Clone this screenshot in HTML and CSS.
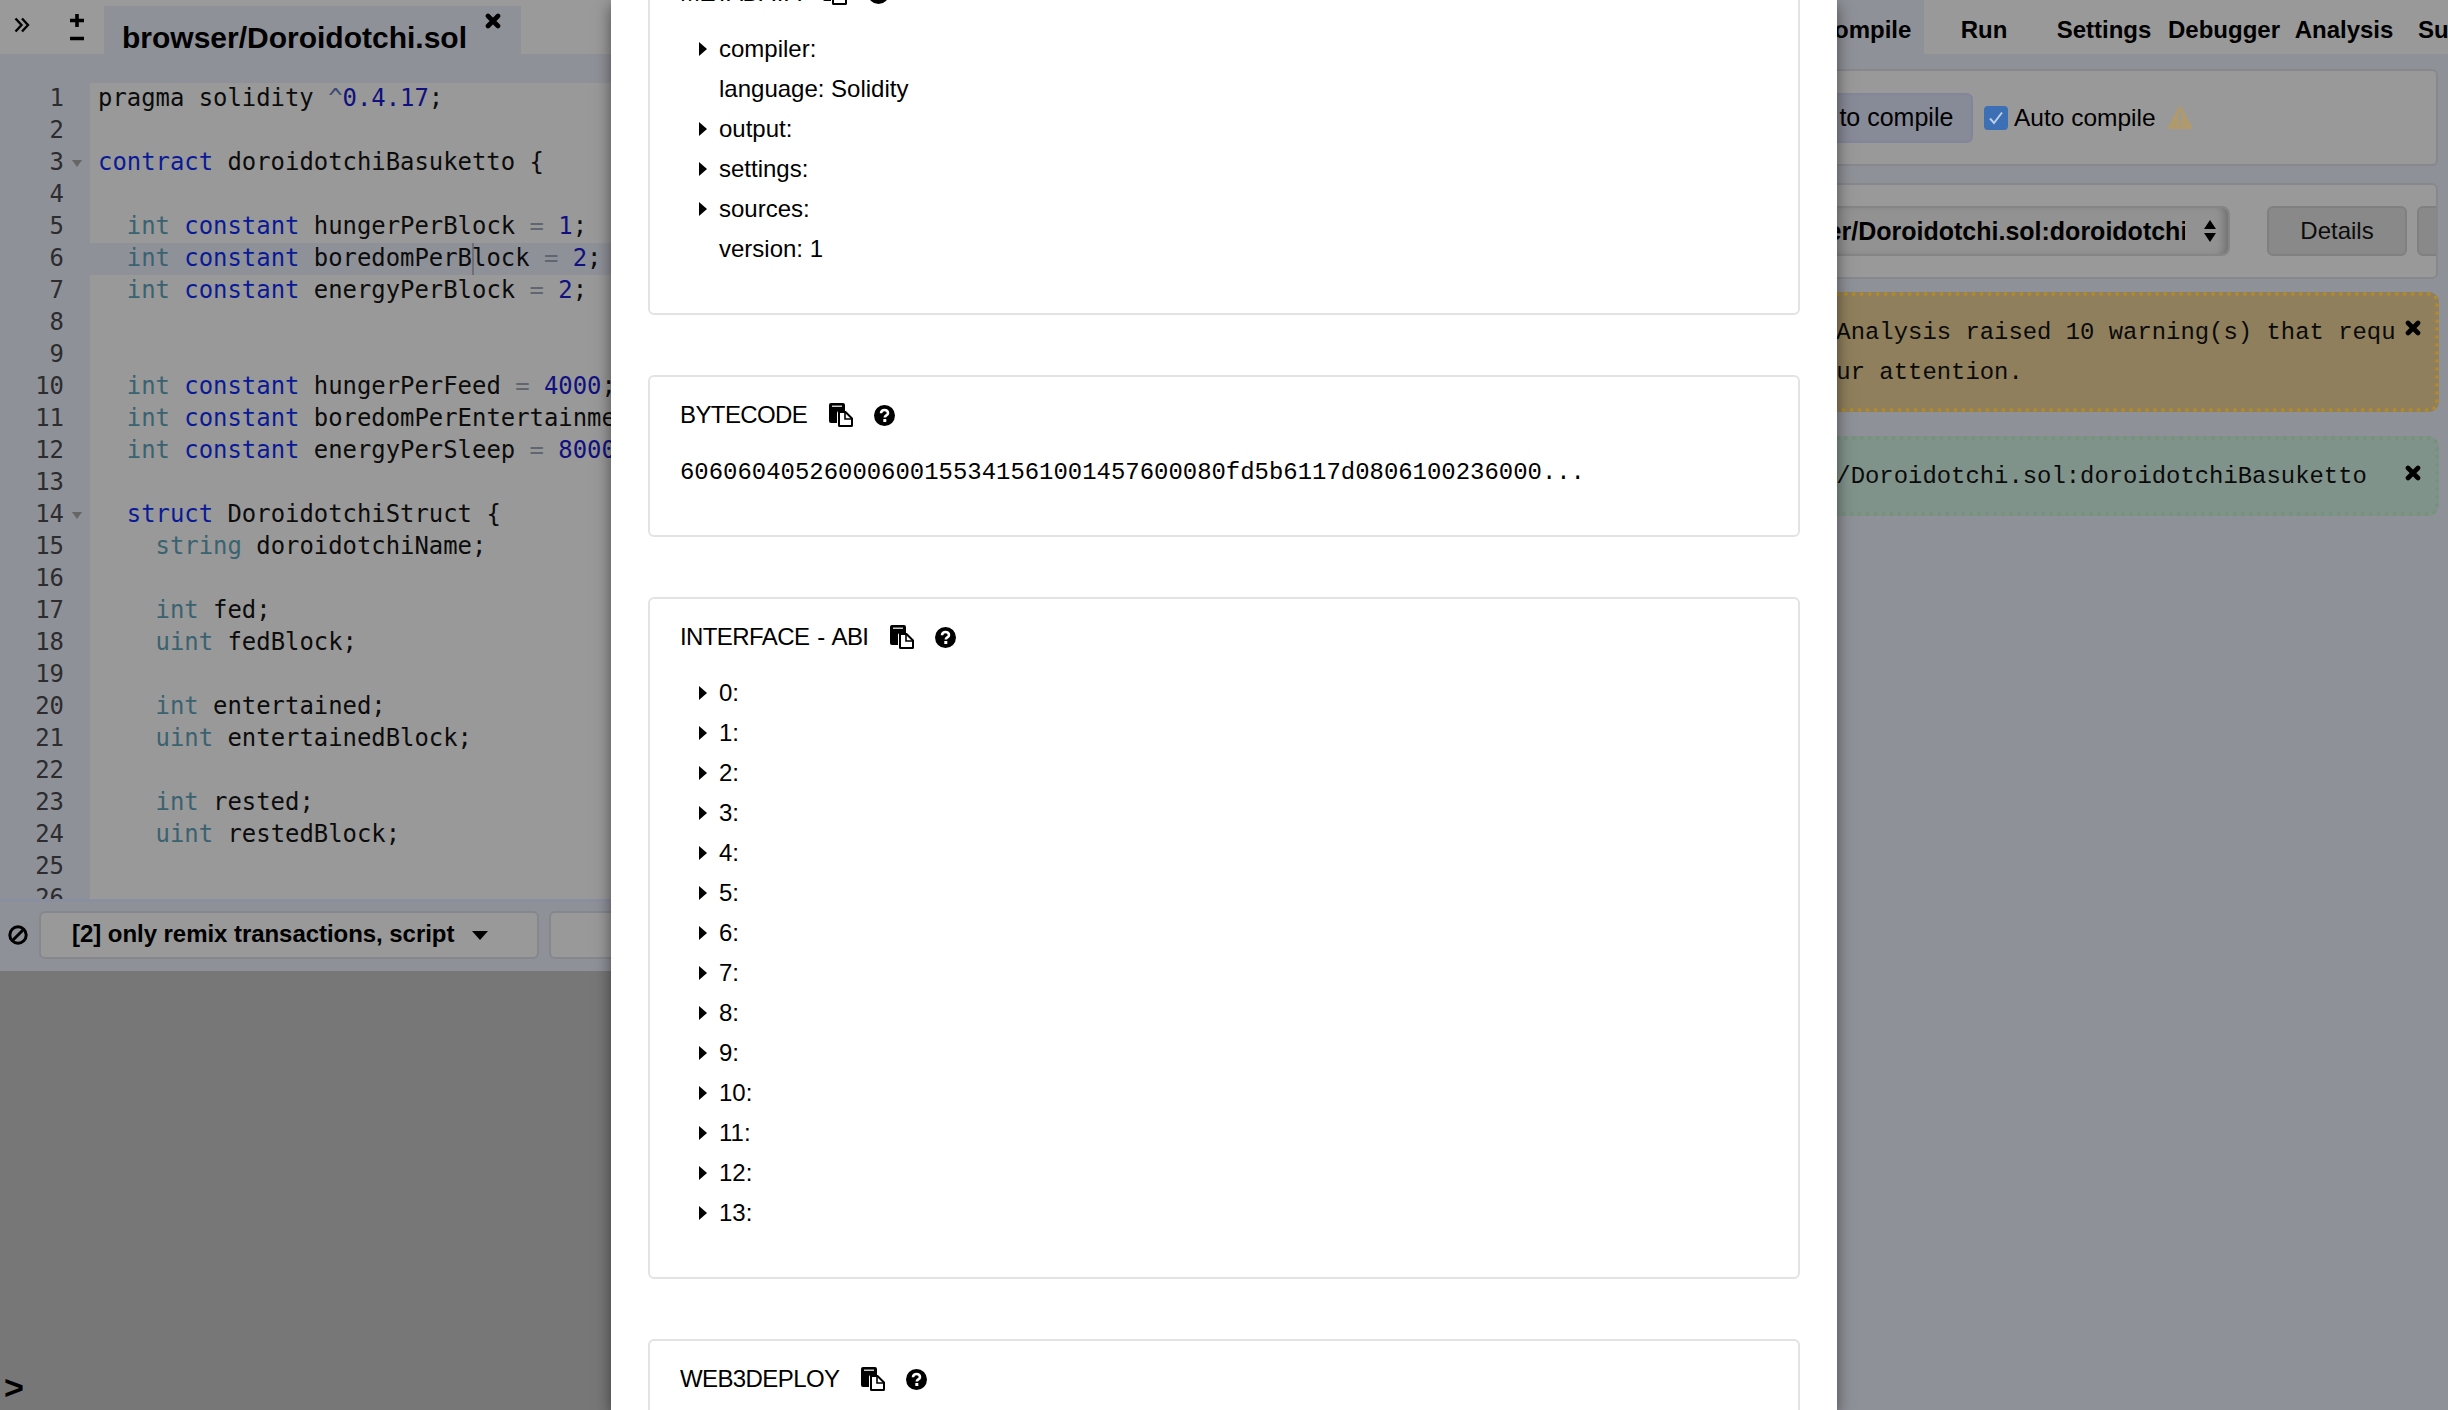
FILE: index.html
```html
<!DOCTYPE html>
<html lang="en">
<head>
<meta charset="utf-8">
<title>Remix</title>
<link rel="stylesheet" href="styles.css">
</head>
<body>
<svg class="sprites" width="0" height="0" aria-hidden="true">
  <symbol id="i-close" viewBox="0 0 16 16"><path d="M3 3 L13 13 M13 3 L3 13" fill="none" stroke="currentColor" stroke-width="4.6" stroke-linecap="round"/></symbol>
  <symbol id="i-copy" viewBox="0 0 24 24"><path d="M2 0H14a2 2 0 0 1 2 2V8H10a2 2 0 0 0-2 2V20H2a2 2 0 0 1-2-2V2a2 2 0 0 1 2-2Z" fill="#000"/><path d="M3 3.2H13" stroke="#fff" stroke-width="1.2"/><path d="M10 9H16.500L23 15.500V22.500a.5.5 0 0 1-.5.5H10.500a.5.5 0 0 1-.5-.5Z" fill="#fff" stroke="#000" stroke-width="2"/><path d="M16 9V16H23" fill="none" stroke="#000" stroke-width="1.600"/></symbol>
  <symbol id="i-help" viewBox="0 0 21 21"><circle cx="10.500" cy="10.500" r="10.500" fill="#000"/><path d="M7 8.200C7 6 8.700 5 10.500 5 12.500 5 14 6.200 14 8 14 10.500 10.800 10.300 10.800 12.400" fill="none" stroke="#fff" stroke-width="2.600"/><rect x="9.300" y="14" width="3" height="3" fill="#fff"/></symbol>
</svg>

<div class="app">
  <section class="left">
    <header class="editor-tabs">
      <span class="tool tool-chev"><svg width="16" height="16" viewBox="0 0 16 16"><path d="M1.500 1.500L7.500 8L1.500 14.500M8 1.500L14 8L8 14.500" fill="none" stroke="#000" stroke-width="2.400"/></svg></span>
      <span class="tool tool-size"><svg width="14" height="27" viewBox="0 0 14 27"><path d="M0 6.500H14M7 0V13M0 24.500H14" fill="none" stroke="#000" stroke-width="3.600"/></svg></span>
      <div class="file-tab">
        <span class="file-name">browser/Doroidotchi.sol</span>
        <svg class="file-close"><use href="#i-close"/></svg>
      </div>
    </header>

    <div class="editor">
      <div class="gutter">
        <div>1</div><div>2</div><div class="fold">3</div><div>4</div><div>5</div><div>6</div><div>7</div><div>8</div><div>9</div><div>10</div><div>11</div><div>12</div><div>13</div><div class="fold">14</div><div>15</div><div>16</div><div>17</div><div>18</div><div>19</div><div>20</div><div>21</div><div>22</div><div>23</div><div>24</div><div>25</div><div>26</div>
      </div>
      <div class="code">
        <div class="line">pragma solidity <span class="op-hat">^</span><span class="num">0.4.17</span>;</div>
        <div class="line"></div>
        <div class="line"><span class="kw">contract</span> doroidotchiBasuketto {</div>
        <div class="line"></div>
        <div class="line">  <span class="ty">int</span> <span class="kw">constant</span> hungerPerBlock <span class="op">=</span> <span class="num">1</span>;</div>
        <div class="line active">  <span class="ty">int</span> <span class="kw">constant</span> boredomPerB<span class="caret"></span>lock <span class="op">=</span> <span class="num">2</span>;</div>
        <div class="line">  <span class="ty">int</span> <span class="kw">constant</span> energyPerBlock <span class="op">=</span> <span class="num">2</span>;</div>
        <div class="line"></div>
        <div class="line"></div>
        <div class="line">  <span class="ty">int</span> <span class="kw">constant</span> hungerPerFeed <span class="op">=</span> <span class="num">4000</span>;</div>
        <div class="line">  <span class="ty">int</span> <span class="kw">constant</span> boredomPerEntertainment <span class="op">=</span> <span class="num">4000</span>;</div>
        <div class="line">  <span class="ty">int</span> <span class="kw">constant</span> energyPerSleep <span class="op">=</span> <span class="num">8000</span>;</div>
        <div class="line"></div>
        <div class="line">  <span class="kw">struct</span> DoroidotchiStruct {</div>
        <div class="line">    <span class="ty">string</span> doroidotchiName;</div>
        <div class="line"></div>
        <div class="line">    <span class="ty">int</span> fed;</div>
        <div class="line">    <span class="ty">uint</span> fedBlock;</div>
        <div class="line"></div>
        <div class="line">    <span class="ty">int</span> entertained;</div>
        <div class="line">    <span class="ty">uint</span> entertainedBlock;</div>
        <div class="line"></div>
        <div class="line">    <span class="ty">int</span> rested;</div>
        <div class="line">    <span class="ty">uint</span> restedBlock;</div>
        <div class="line"></div>
        <div class="line"></div>
      </div>
    </div>

    <div class="term-bar">
      <svg class="block-icon" width="20" height="20" viewBox="0 0 20 20"><circle cx="10" cy="10" r="8.200" fill="none" stroke="#000" stroke-width="3"/><path d="M4.500 15.500L15.500 4.500" stroke="#000" stroke-width="3"/></svg>
      <button class="filter">[2] only remix transactions, script<svg class="caret-down" width="16" height="9" viewBox="0 0 16 9"><path d="M0 0H16L8 9Z" fill="#000"/></svg></button>
      <button class="filter filter-2"></button>
    </div>

    <div class="terminal"><span class="prompt">&gt;</span></div>
  </section>

  <aside class="right">
    <nav class="tabs">
      <span class="tab active">Compile</span>
      <span class="tab">Run</span>
      <span class="tab">Settings</span>
      <span class="tab">Debugger</span>
      <span class="tab">Analysis</span>
      <span class="tab">Support</span>
    </nav>

    <div class="box box-compile">
      <button class="start">Start to compile</button>
      <span class="check"><svg width="16" height="14" viewBox="0 0 16 14"><path d="M2 7.500L6 12L14 1.500" fill="none" stroke="#bcd0ea" stroke-width="2"/></svg></span>
      <span class="auto">Auto compile</span>
      <svg class="warn" width="24" height="23" viewBox="0 0 24 23"><path d="M12 2L22.500 21.500H1.500Z" fill="#b09a6c" stroke="#b09a6c" stroke-width="3" stroke-linejoin="round"/><rect x="10.500" y="7" width="3" height="7.500" fill="#999"/><rect x="10.500" y="16.500" width="3" height="3" fill="#999"/></svg>
    </div>

    <div class="box box-contract">
      <div class="select">
        <span class="select-text">browser/Doroidotchi.sol:doroidotchiBasuketto</span>
        <svg class="updown" width="12" height="22" viewBox="0 0 12 22"><path d="M6 0L12 9H0ZM6 22L0 13H12Z" fill="#000"/></svg>
      </div>
      <button class="btn">Details</button>
      <button class="btn btn-next"></button>
    </div>

    <div class="msg msg-warn">
      Static Analysis raised 10 warning(s) that requires your attention.
      <svg class="msg-close"><use href="#i-close"/></svg>
    </div>
    <div class="msg msg-ok">
      browser/Doroidotchi.sol:doroidotchiBasuketto
      <svg class="msg-close"><use href="#i-close"/></svg>
    </div>
  </aside>

  <div class="modal">
    <section class="card card-meta">
      <h3 class="card-title">METADATA <svg class="ic-copy"><use href="#i-copy"/></svg><svg class="ic-help"><use href="#i-help"/></svg></h3>
      <ul class="tree">
        <li class="node">compiler:</li>
        <li>language: Solidity</li>
        <li class="node">output:</li>
        <li class="node">settings:</li>
        <li class="node">sources:</li>
        <li>version: 1</li>
      </ul>
    </section>

    <section class="card">
      <h3 class="card-title">BYTECODE <svg class="ic-copy"><use href="#i-copy"/></svg><svg class="ic-help"><use href="#i-help"/></svg></h3>
      <p class="hex">60606040526000600155341561001457600080fd5b6117d0806100236000...</p>
    </section>

    <section class="card">
      <h3 class="card-title">INTERFACE - ABI <svg class="ic-copy"><use href="#i-copy"/></svg><svg class="ic-help"><use href="#i-help"/></svg></h3>
      <ul class="tree">
        <li class="node">0:</li><li class="node">1:</li><li class="node">2:</li><li class="node">3:</li><li class="node">4:</li><li class="node">5:</li><li class="node">6:</li><li class="node">7:</li><li class="node">8:</li><li class="node">9:</li><li class="node">10:</li><li class="node">11:</li><li class="node">12:</li><li class="node">13:</li>
      </ul>
    </section>

    <section class="card">
      <h3 class="card-title">WEB3DEPLOY <svg class="ic-copy"><use href="#i-copy"/></svg><svg class="ic-help"><use href="#i-help"/></svg></h3>
    </section>
  </div>
</div>
</body>
</html>
```

FILE: styles.css
```css
* { box-sizing: border-box; }
html, body { margin: 0; height: 100%; overflow: hidden; }
body { font-family: "Liberation Sans", Arial, sans-serif; font-size: 24px; color: #000; background: #777; }
.sprites { position: absolute; }
button { font: inherit; color: inherit; }

.app { position: relative; display: flex; width: 2448px; height: 1410px; overflow: hidden; }

/* left column */
.left { flex: 1; min-width: 0; display: flex; flex-direction: column; }

.editor-tabs { display: flex; align-items: flex-end; height: 54px; flex: none; background: #9a9a9a; }
.tool { display: block; flex: none; }
.tool svg { display: block; }
.tool-chev { align-self: flex-start; margin: 17px 0 0 14px; width: 16px; }
.tool-size { align-self: flex-start; margin: 14px 0 0 40px; width: 14px; }
.file-tab { position: relative; display: flex; align-items: center; width: 417px; height: 48px; margin-left: 20px; padding: 0 0 0 18px; background: #8f9198; }
.file-name { font-size: 30px; font-weight: 700; line-height: 48px; position: relative; top: 8px; }
.file-close { position: absolute; left: 381px; top: 7px; width: 16px; height: 16px; color: #000; }

.editor { display: flex; height: 845px; flex: none; overflow: hidden; background: #8f9198; padding-top: 29px; font-family: "DejaVu Sans Mono", monospace; font-size: 23.9px; line-height: 30px; }
.gutter { width: 90px; flex: none; color: #2c2c2e; text-align: right; padding-right: 26px; }
.gutter div { position: relative; height: 32px; }
.fold::after { content: ""; position: absolute; left: 72px; top: 13px; border: 5.500px solid transparent; border-top: 7px solid #666; border-bottom: 0; }
.code { flex: 1; min-width: 0; background: #999; color: #0c0c0c; }
.line { height: 32px; padding-left: 8px; white-space: pre; }
.line.active { background: #8f9199; }
.kw { color: #0a1a96; }
.ty { color: #3a6270; }
.num { color: #10107e; }
.op { color: #5f6670; }
.op-hat { color: #3a4a72; }
.caret { display: inline-block; width: 0; height: 32px; vertical-align: top; border-left: 2px solid #6f6f74; margin-right: -2px; }

.term-bar { display: flex; align-items: center; height: 72px; flex: none; background: #8f9199; border-top: 3px solid #8a8fa0; padding: 6px 0 10px 8px; }
.block-icon { flex: none; }
.filter { display: block; flex: none; width: 500px; height: 48px; margin-left: 11px; padding: 0 0 2px 31px; background: #999; border: 2px solid #85878d; border-radius: 6px; font-weight: 700; letter-spacing: -.05px; text-align: left; white-space: nowrap; }
.caret-down { margin-left: 18px; vertical-align: 2px; }
.filter-2 { margin-left: 10px; width: 300px; }

.terminal { flex: 1; position: relative; background: #777; }
.prompt { position: absolute; left: 4px; bottom: 6px; font-size: 34px; font-weight: 700; line-height: 34px; }

/* right column */
.right { flex: none; width: 758px; padding-right: 10px; background: #8f9198; }

.tabs { display: flex; height: 54px; margin-right: -10px; padding-left: 114px; background: #999; overflow: hidden; }
.tab { flex: none; width: 120px; text-align: center; font-weight: 700; line-height: 60px; white-space: nowrap; }
.tab.active { background: #8f9198; }

.box { display: flex; align-items: center; overflow: hidden; background: #999; border: 2px solid #87888c; border-radius: 6px; margin-left: 10px; }
.box-compile { height: 97px; margin-top: 15px; padding-left: 58px; }
.box-contract { height: 96px; margin-top: 17px; padding-left: 23px; }

.start { flex: none; width: 213px; height: 50px; padding: 0; background: #878a97; border: 2px solid #83869a; border-radius: 6px; font-size: 25px; }
.check { flex: none; display: flex; align-items: center; justify-content: center; width: 24px; height: 24px; margin-left: 11px; background: #3d6fb5; border-radius: 4px; }
.auto { margin-left: 6px; white-space: nowrap; font-size: 24.5px; }
.warn { flex: none; margin-left: 12px; }

.select { flex: none; position: relative; width: 505px; height: 50px; padding: 0 0 0 27px; background: #929292; border: 2px solid #858585; border-radius: 8px; box-shadow: inset -8px 0 8px -5px #6c6c6c; }
.select-text { display: block; width: 431px; overflow: hidden; white-space: nowrap; font-size: 25px; font-weight: 700; line-height: 46px; }
.updown { position: absolute; right: 12px; top: 12px; }
.btn { flex: none; height: 50px; width: 140px; margin-left: 37px; padding: 0; background: #898989; border: 2px solid #808080; border-radius: 6px; color: #0c0c0c; }
.btn-next { margin-left: 10px; width: 120px; }

.msg { position: relative; margin-left: 10px; margin-right: -1px; padding: 17px 36px 15px 32px; font-family: "Liberation Mono", "Courier New", monospace; font-size: 23.9px; line-height: 40px; word-break: break-all; border-radius: 10px; border: 4px dotted; color: #0a0a0a; }
.msg-warn { margin-top: 13px; height: 120px; background: #8f7f5c; border-color: #b08a2e; }
.msg-ok { margin-top: 24px; height: 80px; background: #80938a; border-color: #76917c; white-space: nowrap; }
.msg-close { position: absolute; right: 14px; top: 24px; width: 16px; height: 16px; color: #000; }
.msg-ok .msg-close { top: 25px; }

/* modal */
.modal { position: absolute; left: 611px; top: 0; bottom: 0; width: 1226px; overflow: hidden; padding: 0 37px; background: #fff; box-shadow: 0 5px 15px rgba(0, 0, 0, .5); }
.card { position: relative; margin-bottom: 60px; padding: 21px 30px 44px; border: 2px solid #e3e3e3; border-radius: 6px; }
.card-meta { margin-top: -47px; }
.card-title { display: flex; align-items: center; height: 34px; margin: 0; font-size: 24px; font-weight: 400; letter-spacing: -.6px; word-spacing: 2px; white-space: nowrap; }
.ic-copy { width: 24px; height: 24px; margin-left: 22px; flex: none; }
.ic-help { width: 21px; height: 21px; margin-left: 21px; flex: none; }
.tree { list-style: none; margin: 19px 0 0; padding: 0 0 0 39px; }
.tree li { position: relative; height: 40px; line-height: 40px; }
.node::before { content: ""; position: absolute; left: -20px; top: 13px; border-left: 8px solid #000; border-top: 7px solid transparent; border-bottom: 7px solid transparent; }
.hex { margin: 21px 0 -2px; font-family: "Liberation Mono", "Courier New", monospace; font-size: 23.95px; line-height: 40px; white-space: nowrap; }
```
